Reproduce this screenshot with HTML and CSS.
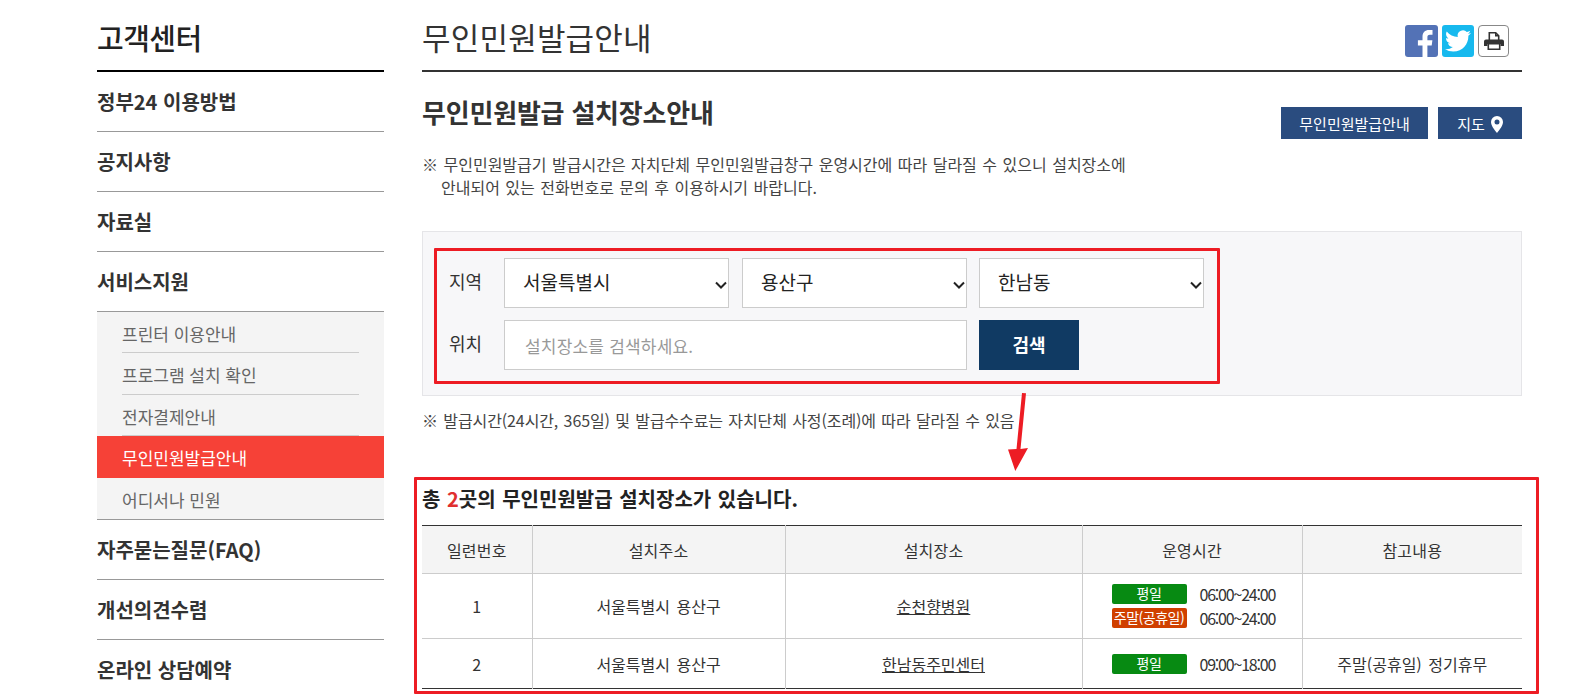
FILE: index.html
```html
<!DOCTYPE html>
<html lang="ko">
<head>
    <meta charset="UTF-8">
    <title>무인민원발급안내</title>
    <link rel="stylesheet" href="styles.css">
</head>
<body>
    <div class="wrap">
        <aside class="side">
            <h2>고객센터</h2>
            <ul class="menu">
                <li><a href="#">정부24 이용방법</a></li>
                <li><a href="#">공지사항</a></li>
                <li><a href="#">자료실</a></li>
                <li>
                    <a href="#">서비스지원</a>
                    <ul class="sub">
                        <li><a href="#">프린터 이용안내</a></li>
                        <li><a href="#">프로그램 설치 확인</a></li>
                        <li><a href="#">전자결제안내</a></li>
                        <li class="on"><a href="#">무인민원발급안내</a></li>
                        <li><a href="#">어디서나 민원</a></li>
                    </ul>
                </li>
                <li><a href="#">자주묻는질문(FAQ)</a></li>
                <li><a href="#">개선의견수렴</a></li>
                <li><a href="#">온라인 상담예약</a></li>
            </ul>
        </aside>

        <main class="main">
            <div class="page-head">
                <h1>무인민원발급안내</h1>
                <div class="share">
                    <a class="sns fb" href="#" aria-label="facebook">
                        <svg viewBox="0 0 33 32" width="33" height="32"><path fill="#fff" transform="translate(0 1.500)" d="M17.500 32V19h-4.600v-5.200h4.600v-3.600C17.500 5.700 20 3.400 24 3.400c1.600 0 3 .1 3.500.2v4.600h-2.600c-2.100 0-2.500 1-2.500 2.500v3.100h5l-.7 5.200h-4.300v13z"/></svg>
                    </a>
                    <a class="sns tw" href="#" aria-label="twitter">
                        <svg viewBox="0 0 24 24" width="26" height="26"><path fill="#fff" d="M23.953 4.57a10 10 0 01-2.825.775 4.958 4.958 0 002.163-2.723c-.951.555-2.005.959-3.127 1.184a4.92 4.92 0 00-8.384 4.482C7.69 8.095 4.067 6.13 1.64 3.162a4.822 4.822 0 00-.666 2.475c0 1.71.87 3.213 2.188 4.096a4.904 4.904 0 01-2.228-.616v.06a4.923 4.923 0 003.946 4.827 4.996 4.996 0 01-2.212.085 4.936 4.936 0 004.604 3.417 9.867 9.867 0 01-6.102 2.105c-.39 0-.779-.023-1.17-.067a13.995 13.995 0 007.557 2.209c9.053 0 13.998-7.496 13.998-13.985 0-.21 0-.42-.015-.63A9.935 9.935 0 0024 4.59z"/></svg>
                    </a>
                    <a class="sns print" href="#" aria-label="print">
                        <svg viewBox="0 0 20 18" width="20" height="18">
                            <path fill="#fff" stroke="#333" stroke-width="1.600" d="M5.300 9V.8h6.400l3 3V9z"/>
                            <path fill="#333" d="M11 1h1.500v2h2v1.500H11z"/>
                            <path fill="#333" d="M2 7.500h16a2 2 0 0 1 2 2V14h-3.500v-2h-13v2H0V9.500a2 2 0 0 1 2-2z"/>
                            <path fill="#fff" stroke="#333" stroke-width="1.600" d="M4.300 11.800h11.400v5.400H4.300z"/>
                        </svg>
                    </a>
                </div>
            </div>

            <div class="sub-head">
                <h3>무인민원발급 설치장소안내</h3>
                <div class="sub-btns">
                    <a class="btn" href="#">무인민원발급안내</a>
                    <a class="btn btn-map" href="#">지도
                        <svg viewBox="0 0 12 17" width="12" height="17"><path fill="#fff" fill-rule="evenodd" d="M6 0a6 6 0 0 1 6 6c0 3.500-3.500 8-6 11C3.500 14 0 9.500 0 6a6 6 0 0 1 6-6zm0 3.500a2.500 2.500 0 1 0 0 5 2.500 2.500 0 0 0 0-5z"/></svg>
                    </a>
                </div>
            </div>

            <p class="note">※ 무인민원발급기 발급시간은 자치단체 무인민원발급창구 운영시간에 따라 달라질 수 있으니 설치장소에<br><span class="indent">안내되어 있는 전화번호로 문의 후 이용하시기 바랍니다.</span></p>

            <form class="search">
                <div class="search-row">
                    <label>지역</label>
                    <select><option>서울특별시</option></select>
                    <select><option>용산구</option></select>
                    <select><option>한남동</option></select>
                </div>
                <div class="search-row">
                    <label>위치</label>
                    <input type="text" placeholder="설치장소를 검색하세요.">
                    <button type="button">검색</button>
                </div>
                <div class="mark mark-search"></div>
            </form>

            <p class="note note-time">※ 발급시간(24시간, 365일) 및 발급수수료는 자치단체 사정(조례)에 따라 달라질 수 있음</p>

            <section class="result">
                <h4>총 <em>2</em>곳의 무인민원발급 설치장소가 있습니다.</h4>
                <table>
                    <colgroup>
                        <col class="c1"><col class="c2"><col class="c3"><col class="c4"><col>
                    </colgroup>
                    <thead>
                        <tr><th>일련번호</th><th>설치주소</th><th>설치장소</th><th>운영시간</th><th>참고내용</th></tr>
                    </thead>
                    <tbody>
                        <tr class="row-tall">
                            <td>1</td>
                            <td>서울특별시 용산구</td>
                            <td><a href="#">순천향병원</a></td>
                            <td class="hours">
                                <div class="hour"><span class="tag day">평일</span><span class="time">06:00~24:00</span></div>
                                <div class="hour"><span class="tag end">주말(공휴일)</span><span class="time">06:00~24:00</span></div>
                            </td>
                            <td></td>
                        </tr>
                        <tr>
                            <td>2</td>
                            <td>서울특별시 용산구</td>
                            <td><a href="#">한남동주민센터</a></td>
                            <td class="hours">
                                <div class="hour"><span class="tag day">평일</span><span class="time">09:00~18:00</span></div>
                            </td>
                            <td>주말(공휴일) 정기휴무</td>
                        </tr>
                    </tbody>
                </table>
                <div class="mark mark-result"></div>
            </section>

            <svg class="arrow" viewBox="0 0 25 82" width="25" height="82"><path fill="#ed1c24" d="M17 3l4 .3L15.500 59l7.500-1-12.700 23L3 59.500l8.500-.5z"/></svg>
        </main>
    </div>
</body>
</html>
```

FILE: styles.css
```css
* {
    box-sizing: border-box;
}

html, body {
    height: 696px;
    overflow: hidden;
}

body {
    margin: 0;
    background: #fff;
    color: #333;
    font-family: "Noto Sans CJK KR", "Noto Sans", sans-serif;
    font-size: 15px;
}

a {
    color: inherit;
    text-decoration: none;
}

ul {
    list-style: none;
    margin: 0;
    padding: 0;
}

.wrap {
    display: flex;
    gap: 38px;
    padding-left: 97px;
}

/* left menu */
.side {
    width: 287px;
    flex: none;
}

.side h2 {
    margin: 0;
    height: 72px;
    border-bottom: 2px solid #000;
    color: #222;
    font-size: 29px;
    font-weight: 500;
    line-height: 74px;
    letter-spacing: -.5px;
}

.menu > li > a {
    display: block;
    height: 60px;
    border-bottom: 1px solid #999;
    font-size: 20px;
    font-weight: 700;
    line-height: 59px;
}

.sub {
    border-bottom: 1px solid #999;
    background: #f4f4f4;
}

.sub li {
    height: 41.4px;
    padding: 0 25px;
}

.sub a {
    display: block;
    height: 100%;
    border-bottom: 1px solid #ccc;
    color: #666;
    font-size: 17px;
    line-height: 43px;
}

.sub li:last-child a {
    border-bottom: 0;
}

.sub li.on {
    background: #f64137;
}

.sub li.on a {
    border-bottom: 0;
    color: #fff;
}

/* content */
.main {
    position: relative;
    width: 1100px;
    flex: none;
}

.page-head {
    display: flex;
    justify-content: space-between;
    height: 72px;
    border-bottom: 2px solid #333;
}

.page-head h1 {
    margin: 0;
    color: #333;
    font-size: 31px;
    font-weight: 400;
    line-height: 74px;
    letter-spacing: .2px;
}

.share {
    display: flex;
    gap: 4px;
    margin: 25px 13px 0 0;
}

.sns {
    display: flex;
    align-items: center;
    justify-content: center;
    width: 32px;
    height: 32px;
    border-radius: 3px;
    overflow: hidden;
}

.fb {
    width: 33px;
    background: #5372b6;
}

.tw {
    background: #17b9ee;
}

.print {
    width: 31px;
    border: 1px solid #888;
    border-radius: 4px;
}

.sub-head {
    display: flex;
    justify-content: space-between;
    height: 81px;
}

.sub-head h3 {
    margin: 0;
    color: #333;
    font-size: 26px;
    font-weight: 700;
    line-height: 80px;
    letter-spacing: -.2px;
}

.sub-btns {
    display: flex;
    gap: 10px;
    margin-top: 35px;
}

.btn {
    display: flex;
    align-items: center;
    justify-content: center;
    gap: 6px;
    width: 147px;
    height: 32px;
    background: #2a4c7f;
    color: #fff;
    font-size: 15px;
}

.btn svg {
    margin-top: 2px;
}

.btn-map {
    width: 84px;
}

.note {
    margin: 0;
    color: #444;
    font-size: 16px;
    line-height: 23px;
    word-spacing: 1px;
}

.note .indent {
    padding-left: 19px;
}

.search {
    position: relative;
    display: flex;
    flex-direction: column;
    gap: 12px;
    height: 165px;
    margin-top: 32px;
    padding: 26px 0 0 26px;
    border: 1px solid #e5e5e8;
    background: #f7f7f9;
}

.search-row {
    display: flex;
    gap: 12px;
    align-items: center;
}

.search-row label {
    width: 43px;
    padding-bottom: 5px;
    font-size: 18px;
    color: #333;
}

.search select {
    width: 225px;
    height: 50px;
    padding: 0 0 3px 18px;
    border: 1px solid #ccc;
    border-radius: 0;
    appearance: none;
    background: #fff url("data:image/svg+xml,%3Csvg xmlns='http://www.w3.org/2000/svg' width='12' height='8'%3E%3Cpath d='M1 1.500l5 5 5-5' fill='none' stroke='%23222' stroke-width='2'/%3E%3C/svg%3E") no-repeat right 1px top 22px;
    color: #222;
    font-family: inherit;
    font-size: 19px;
}

.search select:nth-of-type(2) {
    margin-left: 1px;
}

.search input {
    width: 463px;
    height: 50px;
    padding: 0 20px;
    border: 1px solid #ccc;
    background: #fff;
    font-family: inherit;
    font-size: 17px;
    letter-spacing: .2px;
}

.search input::placeholder {
    color: #999;
}

.search button {
    width: 100px;
    height: 50px;
    padding: 0 0 2px;
    border: 0;
    background: #103a63;
    color: #fff;
    font-family: inherit;
    font-size: 18px;
    font-weight: 700;
}

.note-time {
    margin-top: 13px;
    letter-spacing: -.1px;
}

.result {
    position: relative;
    margin-top: 53px;
}

.result h4 {
    margin: 0;
    height: 40px;
    color: #222;
    font-size: 20px;
    font-weight: 700;
    line-height: 28px;
    word-spacing: 1px;
}

.result em {
    color: #e03030;
    font-style: normal;
}

table {
    width: 1100px;
    table-layout: fixed;
    border-collapse: collapse;
    border-top: 1px solid #333;
    border-bottom: 1px solid #333;
}

.c1 { width: 110px; }
.c2 { width: 253px; }
.c3 { width: 297px; }
.c4 { width: 220px; }

th, td {
    padding: 0;
    border-left: 1px solid #ccc;
    border-bottom: 1px solid #ccc;
    text-align: center;
    font-size: 16px;
    word-spacing: 2px;
}

th:first-child, td:first-child {
    border-left: 0;
}

th {
    height: 48px;
    padding-top: 1px;
    background: #f4f4f4;
    font-weight: 400;
    letter-spacing: .2px;
}

td {
    height: 50px;
}

tbody tr:last-child td {
    border-bottom: 0;
}

.row-tall td {
    height: 65px;
}

td a {
    text-decoration: underline;
}

.hours {
    padding-left: 29px;
}

.hour {
    display: flex;
    align-items: center;
    gap: 13px;
    height: 24px;
}

.tag {
    width: 75px;
    height: 20px;
    border-radius: 2px;
    color: #fff;
    font-size: 14px;
    line-height: 19px;
    letter-spacing: -.5px;
    word-spacing: 0;
}

.day { background: #078a12; }
.end { background: #d04000; }

.time {
    letter-spacing: -1.2px;
}

/* red marks laid over the captured page */
.mark {
    position: absolute;
    border: 3px solid #ed1c24;
    border-radius: 1px;
    pointer-events: none;
}

.mark-search {
    top: 16px;
    left: 11px;
    width: 786px;
    height: 136px;
}

.mark-result {
    top: -8px;
    left: -8px;
    width: 1125px;
    height: 217px;
}

.arrow {
    position: absolute;
    top: 390px;
    left: 583px;
}
```
